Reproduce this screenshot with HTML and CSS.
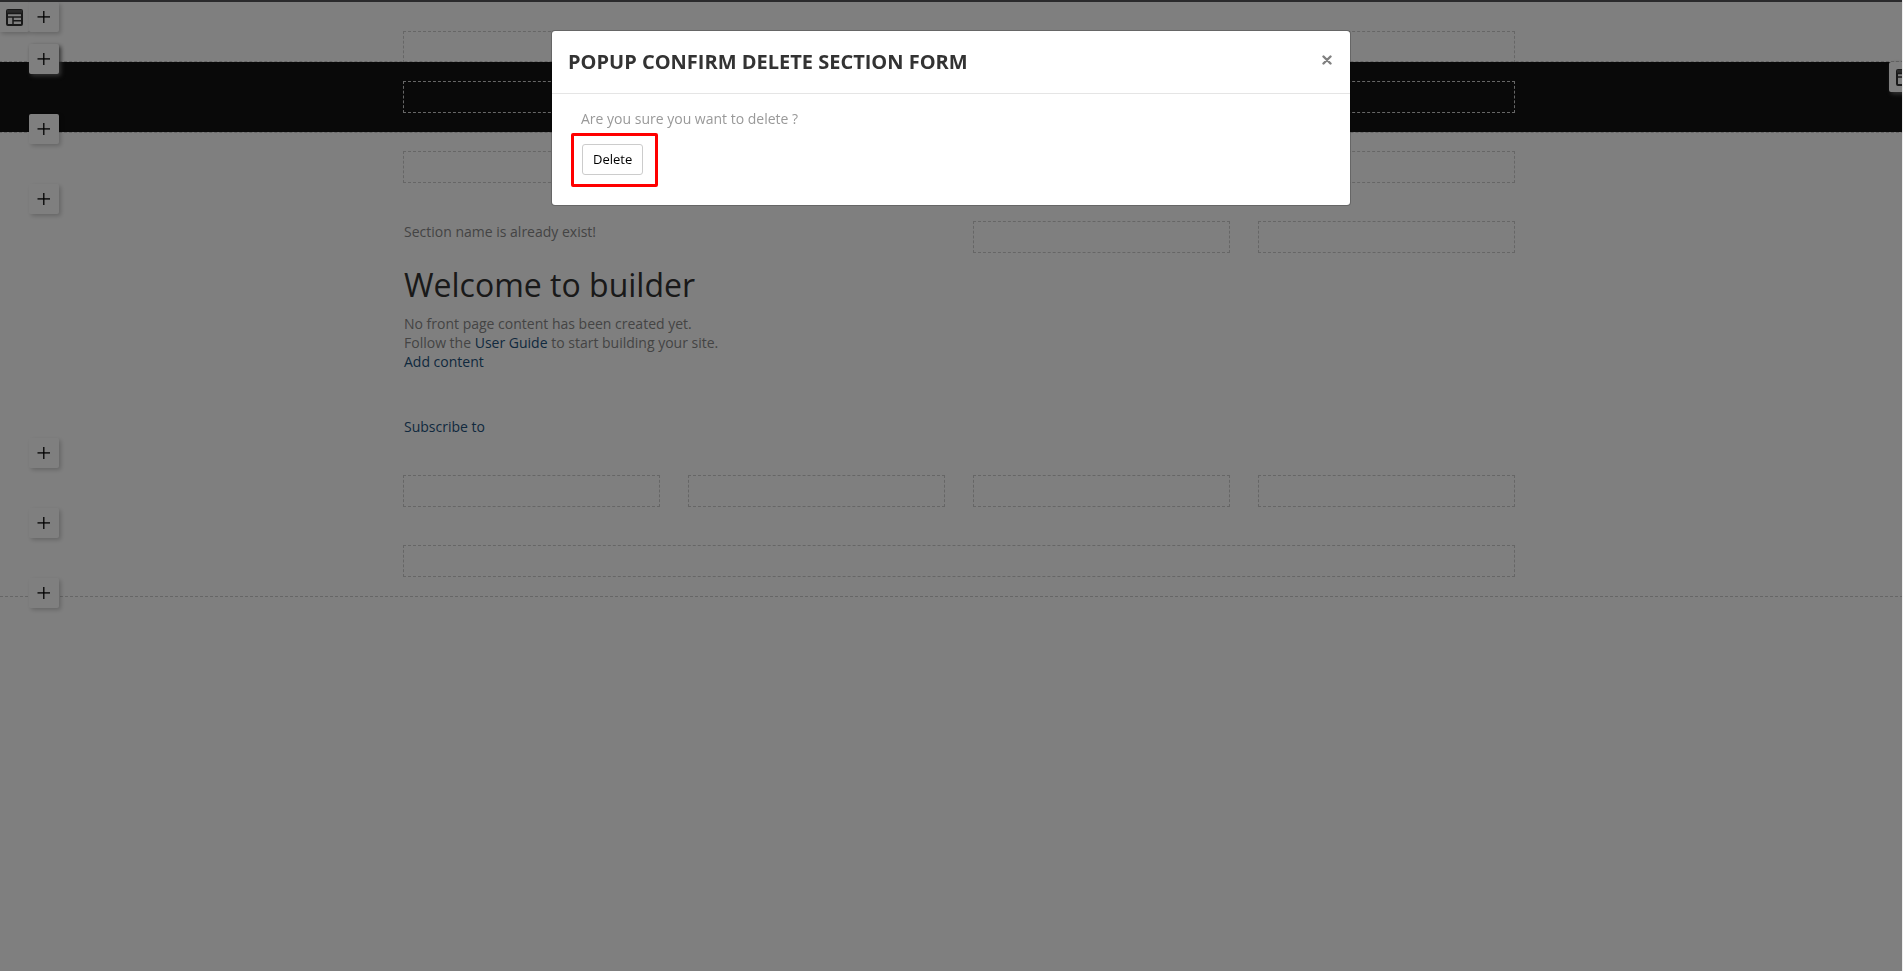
FILE: index.html
```
<!DOCTYPE html>
<html lang="en">

<head>
    <meta charset="UTF-8">
    <meta name="viewport" content="width=device-width, initial-scale=1.0">
    <title>Builder</title>
    <link rel="stylesheet" href="styles.css">
</head>

<body>
    <svg class="sprite" xmlns="http://www.w3.org/2000/svg">
        <symbol id="icon-plus" viewBox="0 0 14 14">
            <path d="M6.8 1v12" fill="none" stroke="#000" stroke-width="1.3" />
            <path d="M0.5 6.9h12.5" fill="none" stroke="#000" stroke-width="1.3" />
        </symbol>
        <symbol id="icon-layout" viewBox="0 0 17 17">
            <rect x="1" y="1" width="15" height="15" rx="1" fill="none" stroke="#333" stroke-width="2" />
            <rect x="1" y="1" width="15" height="3" fill="#555" />
            <path d="M1 4.5h15M1 8h15M7 8v8M7 11.8h9" fill="none" stroke="#333" stroke-width="1.5" />
        </symbol>
    </svg>

    <div class="page">
        <main class="builder">
            <section class="section section-first">
                <div class="tools tools-top">
                    <button class="tool-btn" aria-label="Layout"><svg class="icon-layout"><use href="#icon-layout" /></svg></button>
                    <button class="tool-btn" aria-label="Add section"><svg class="icon-plus"><use href="#icon-plus" /></svg></button>
                </div>
                <div class="container">
                    <div class="block block-full"></div>
                </div>
            </section>

            <section class="section section-dark">
                <div class="tools">
                    <button class="tool-btn" aria-label="Add section"><svg class="icon-plus"><use href="#icon-plus" /></svg></button>
                </div>
                <div class="container">
                    <div class="block block-full"></div>
                </div>
                <button class="tool-btn section-settings" aria-label="Section settings"><svg class="icon-layout"><use href="#icon-layout" /></svg></button>
            </section>

            <section class="section">
                <div class="tools">
                    <button class="tool-btn" aria-label="Add section"><svg class="icon-plus"><use href="#icon-plus" /></svg></button>
                </div>
                <div class="container">
                    <div class="block block-full"></div>
                </div>
            </section>

            <section class="section">
                <div class="tools">
                    <button class="tool-btn" aria-label="Add section"><svg class="icon-plus"><use href="#icon-plus" /></svg></button>
                </div>
                <div class="container">
                    <div class="content">
                        <p>Section name is already exist!</p>
                        <h1>Welcome to builder</h1>
                        <p>No front page content has been created yet.</p>
                        <p>Follow the <a href="#">User Guide</a> to start building your site.</p>
                        <p><a href="#">Add content</a></p>
                        <p class="feed"><a href="#">Subscribe to</a></p>
                    </div>
                    <div class="block"></div>
                    <div class="block"></div>
                </div>
            </section>

            <section class="section">
                <div class="tools">
                    <button class="tool-btn" aria-label="Add section"><svg class="icon-plus"><use href="#icon-plus" /></svg></button>
                </div>
                <div class="container">
                    <div class="block"></div>
                    <div class="block"></div>
                    <div class="block"></div>
                    <div class="block"></div>
                </div>
            </section>

            <section class="section section-last">
                <div class="tools">
                    <button class="tool-btn" aria-label="Add section"><svg class="icon-plus"><use href="#icon-plus" /></svg></button>
                </div>
                <div class="container">
                    <div class="block block-full"></div>
                </div>
                <div class="tools tools-end">
                    <button class="tool-btn" aria-label="Add section"><svg class="icon-plus"><use href="#icon-plus" /></svg></button>
                </div>
            </section>
        </main>
    </div>

    <div class="backdrop">
        <div class="modal" role="dialog" aria-modal="true" aria-labelledby="modal-title">
            <div class="modal-header">
                <h2 id="modal-title">Popup Confirm Delete Section Form</h2>
                <button class="modal-close" aria-label="Close">
                    <svg viewBox="0 0 10 10">
                        <path d="M1.5 1.5l7 7M8.5 1.5l-7 7" fill="none" stroke="#808080" stroke-width="2.4" stroke-linecap="round" />
                    </svg>
                </button>
            </div>
            <div class="modal-body">
                <p>Are you sure you want to delete ?</p>
                <div class="highlight">
                    <button class="btn-delete">Delete</button>
                </div>
            </div>
        </div>
    </div>
</body>

</html>
```
FILE: styles.css
```
* {
    box-sizing: border-box;
}

body {
    margin: 0;
    min-height: 100vh;
    overflow: hidden;
    background: #fff;
    color: #888;
    font-family: "Open Sans", sans-serif;
    font-size: 14px;
    line-height: 19px;
}

h1,
h2,
p {
    margin: 0;
}

a {
    color: #23527c;
    text-decoration: none;
}

button {
    padding: 0;
    border: none;
    font-family: inherit;
    cursor: pointer;
}

svg {
    display: block;
}

.sprite {
    position: absolute;
    width: 0;
    height: 0;
}

.page {
    margin-right: -15px;
    border-top: 2px solid #555558;
}

.builder {
    padding-top: 10px;
}

/* sections */
.section {
    position: relative;
    padding: 19px 0;
}

.section-first {
    padding-bottom: 0;
    margin-bottom: -1px;
}

.section-dark {
    background: #121212;
    outline: 1px dashed #ccc;
}

.section-last {
    border-bottom: 1px dashed #ccc;
}

.container {
    display: grid;
    grid-template-columns: repeat(4, 1fr);
    align-items: start;
    gap: 28px;
    max-width: 1140px;
    margin: 0 auto;
    padding: 0 14px;
}

.block {
    height: 32px;
    border: 1px dashed #ccc;
}

.block-full {
    grid-column: 1 / -1;
}

.content {
    grid-column: span 2;
    padding: 1px;
}

.content h1 {
    margin: 22px 0 7px;
    color: #333;
    font-size: 32px;
    font-weight: 400;
    line-height: 44px;
}

.feed {
    margin-top: 46px;
}

/* section tools */
.tools {
    position: absolute;
    z-index: 1;
    top: -18px;
    left: 29px;
    display: flex;
}

.tools-top {
    top: -10px;
    left: -1px;
}

.tools-end {
    top: auto;
    bottom: -12px;
}

.tool-btn {
    display: flex;
    align-items: center;
    justify-content: center;
    width: 30px;
    height: 30px;
    border-radius: 2px;
    background: #fff;
    box-shadow: 2px 2px 4px rgba(0, 0, 0, 0.2);
}

.section-dark .tool-btn {
    box-shadow: 2px 2px 4px #666;
}

.icon-plus {
    width: 14px;
    height: 14px;
}

.icon-layout {
    width: 17px;
    height: 17px;
}

.section-settings {
    position: absolute;
    top: 0;
    right: -1px;
}

/* modal */
.backdrop {
    position: fixed;
    z-index: 10;
    inset: 0;
    padding: 30px 16px;
    border-right: 1px solid #eee;
    background: rgba(0, 0, 0, 0.5);
}

.modal {
    max-width: 800px;
    margin: 0 auto;
    border: 1px solid rgba(0, 0, 0, 0.2);
    border-radius: 4px;
    background: #fff;
    background-clip: padding-box;
}

.modal-header {
    display: flex;
    align-items: flex-start;
    justify-content: space-between;
    padding: 15px 15px 15px 16px;
    border-bottom: 1px solid #e5e5e5;
}

.modal-header h2 {
    color: #333;
    font-size: 20px;
    font-weight: 700;
    line-height: 32px;
    text-transform: uppercase;
}

.modal-close {
    padding: 9px 3px;
    background: none;
}

.modal-close svg {
    width: 10px;
    height: 10px;
}

.modal-body {
    padding: 15px 29px 18px;
    color: #999;
}

.highlight {
    display: inline-block;
    margin: 5px 0 0 -10px;
    padding: 8px 12px 9px 8px;
    border: 3px solid #f00;
    border-radius: 2px;
}

.btn-delete {
    display: block;
    height: 31px;
    padding: 0 10px 1px;
    border: 1px solid #ccc;
    border-radius: 3px;
    background: #fff;
    color: #000;
    font-size: 13px;
}
```
